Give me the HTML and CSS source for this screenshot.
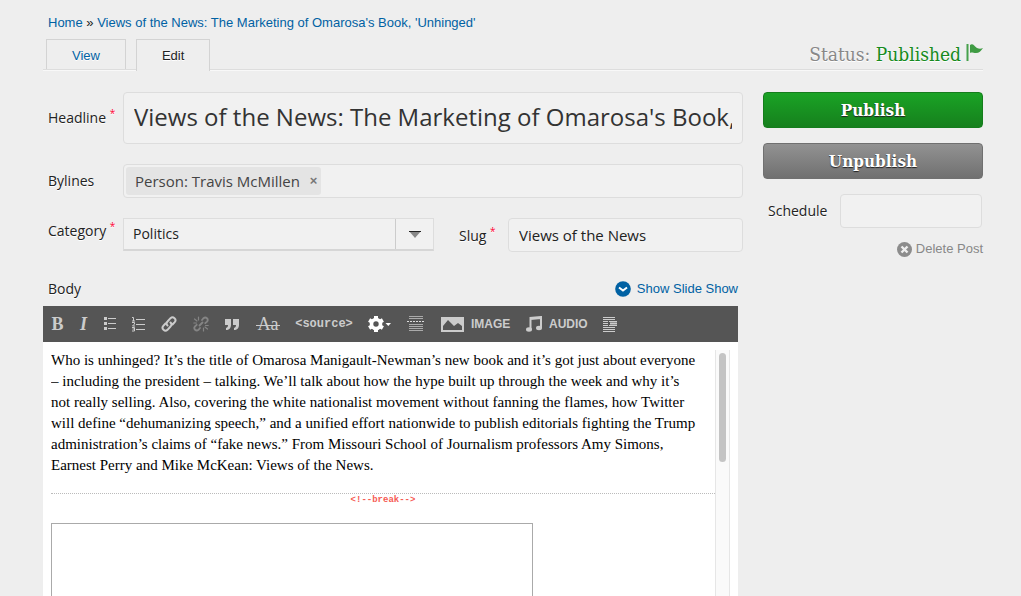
FILE: index.html
```html
<!DOCTYPE html>
<html lang="en">
<head>
<meta charset="utf-8">
<title>Edit post</title>
<link rel="stylesheet" href="styles.css">
</head>
<body>
<div class="page">
  <header class="top">
    <nav class="crumbs" aria-label="Breadcrumb"><a href="#">Home</a> » <a href="#">Views of the News: The Marketing of Omarosa's Book, 'Unhinged'</a></nav>
    <div class="bar">
      <nav class="tabs" aria-label="Post"><a class="tab" href="#">View</a><a class="tab tab-on" href="#">Edit</a></nav>
      <div class="status"><span>Status: <b class="state">Published</b></span>
        <svg class="flag" width="17" height="18" viewBox="0 0 17 18"><path d="M1.500 0v17" stroke="#47a04b" stroke-width="2"/><path d="M4 1c3-2 4 1 7 3 2 1 4 1 6 0-2 3-4 5-7 5-3 0-4-1-6 0z" fill="#3f9b43"/></svg>
      </div>
    </div>
  </header>
  <main class="layout">
    <section class="form">
      <div class="row">
        <label class="label" for="headline">Headline <sup class="req">*</sup></label>
        <input class="field headline" id="headline" type="text" value="Views of the News: The Marketing of Omarosa's Book, 'Unhinged'">
      </div>
      <div class="row">
        <label class="label" for="bylines">Bylines</label>
        <div class="field tokens">
          <span class="token">Person: Travis McMillen <button class="remove" type="button" aria-label="Remove">×</button></span>
          <input class="token-input" id="bylines" type="text">
        </div>
      </div>
      <div class="row row-last">
        <label class="label label-up" for="category">Category <sup class="req">*</sup></label>
        <div class="pair">
          <div class="select">
            <select class="picker" id="category"><option>Politics</option></select>
            <span class="arrow"><svg width="12" height="7" viewBox="0 0 12 7"><path d="M0 0h12L6 7z" fill="#888"/><path d="M0 0h12v1H0z" fill="#222"/></svg></span>
          </div>
          <label class="slug-label" for="slug">Slug <sup class="req">*</sup></label>
          <input class="field slug" id="slug" type="text" value="Views of the News">
        </div>
      </div>
      <div class="body-head">
        <span class="label">Body</span>
        <a class="slides" href="#"><svg width="16" height="16" viewBox="0 0 16 16"><circle cx="8" cy="8" r="7.800" fill="#0061a3"/><path d="M4 6.500l4 3 4-3" fill="none" stroke="#fff" stroke-width="2"/></svg>Show Slide Show</a>
      </div>
      <div class="editor">
        <div class="toolbar" role="toolbar">
          <button class="tool bold w11" type="button">B</button>
          <button class="tool ital w9" type="button">I</button>
          <button class="tool" type="button" aria-label="Bullets"><svg width="12" height="14" viewBox="0 0 12 14"><path d="M0 0h3v3H0zM0 5h3v3H0zM0 10h3v3H0zM4 1h8v1H4zM4 6h8v1H4zM4 11h8v1H4z" fill="#ccc"/></svg></button>
          <button class="tool" type="button" aria-label="Numbers"><svg width="13" height="15" viewBox="0 0 13 15"><path d="M4 2h9v1H4zM4 7h9v1H4zM4 12h9v1H4z" fill="#ccc"/><path d="M0 .5h1.500V4M0 4h3M0 5.500h2.500v1.500L.5 9H3M0 10.500h2.500v3.500H0M.5 12h2" fill="none" stroke="#ccc"/></svg></button>
          <button class="tool" type="button" aria-label="Link"><svg width="16" height="16" viewBox="0 0 16 16" fill="none" stroke="#ccc" stroke-width="2" stroke-linecap="round"><path d="M6.500 9.500c-1.500-1.500-1-3 0-4L9.500 2.200c2.600-2.400 6.600 1 4.200 3.900L11.500 8.500M9.500 6.500c1.500 1.500 1 3 0 4l-3 3.300c-2.600 2.400-6.600-1-4.200-3.900L4.500 7.500"/></svg></button>
          <button class="tool" type="button" aria-label="Unlink"><svg width="16" height="16" viewBox="0 0 16 16" fill="none" stroke="#858585" stroke-width="1.800" stroke-linecap="round"><path d="M9 4l1.500-1.800c2.500-2 5.500 1 3.500 3.400L12.300 7.200M7 12l-1.500 1.800c-2.500 2-5.500-1-3.500-3.400l1.700-1.600M6.500 9.500l3-3"/><path stroke-width="1.200" d="M5.500 1v3M1.500 3L4 5M.8 7h2.700M10.500 12v3M12 11l2.500 2M12.500 9.500h2.700"/></svg></button>
          <button class="tool" type="button" aria-label="Quote"><svg width="15" height="13" viewBox="0 0 15 13"><path d="M0 1h6v6c0 3-2 5-5 5v-2c1.500-.5 2-1.500 2-3H0zM8 1h6v6c0 3-2 5-5 5v-2c1.500-.5 2-1.500 2-3H8z" fill="#ccc"/></svg></button>
          <button class="tool strike w24" type="button">Aa</button>
          <button class="tool source w56" type="button">&lt;source&gt;</button>
          <button class="tool" type="button" aria-label="Settings"><svg width="23" height="16" viewBox="0 0 23 16"><g fill="none" stroke="#fff"><circle cx="8" cy="8" r="4.500" stroke-width="3.600"/><path stroke-width="4" d="M8 0v3M8 13v3M1.100 4l2.500 1.500M12.400 10.500L14.900 12M1.100 12l2.500-1.500M12.400 5.500L14.900 4"/></g><path d="M17.500 7H23l-2.700 3z" fill="#fff"/></svg></button>
          <button class="tool" type="button" aria-label="Teaser break"><svg width="18" height="16" viewBox="0 0 18 16"><path d="M2 .5h14M2 2.500h14M2 8.500h14M2 10.500h14M2 12.500h14M2 14.500h14" stroke="#aaa"/><path d="M0 5.500h18" stroke="#ddd" stroke-dasharray="2 1"/></svg></button>
          <button class="tool media w69" type="button"><svg width="23" height="15" viewBox="0 0 23 15"><path fill-rule="evenodd" d="M0 0h23v15H0zM2 13h19V9l-4-3-4 3-6-6-5 6z" fill="#ccc"/></svg>IMAGE</button>
          <button class="tool media w61" type="button"><svg class="note" width="16" height="16" viewBox="0 0 16 16"><path d="M4.500 13V2L15 1v11M4.500 3L15 2" fill="none" stroke="#ccc" stroke-width="2"/><ellipse cx="3" cy="13.500" rx="3" ry="2.200" fill="#ccc"/><ellipse cx="13" cy="12" rx="3" ry="2.200" fill="#ccc"/></svg>AUDIO</button>
          <button class="tool" type="button" aria-label="Pull text"><svg width="14" height="15" viewBox="0 0 14 15"><path d="M0 .5h12M0 2.500h12M0 4.500h5M0 6.500h5M0 8.500h5M0 10.500h12M0 12.500h12M0 14.500h12M6 4.500h8M6 8.500h8" stroke="#ccc"/><path d="M7 6.500h7" stroke="#ccc" stroke-width="2"/></svg></button>
        </div>
        <div class="content">
          <div class="doc">
            <p class="text">Who is unhinged? It’s the title of Omarosa Manigault-Newman’s new book and it’s got just about everyone<br>– including the president – talking. We’ll talk about how the hype built up through the week and why it’s<br>not really selling. Also, covering the white nationalist movement without fanning the flames, how Twitter<br>will define “dehumanizing speech,” and a unified effort nationwide to publish editorials fighting the Trump<br>administration’s claims of “fake news.” From Missouri School of Journalism professors Amy Simons,<br>Earnest Perry and Mike McKean: Views of the News.</p>
            <div class="break">&lt;!--break--&gt;</div>
            <div class="embed"></div>
          </div>
          <div class="track"><div class="thumb"></div></div>
        </div>
      </div>
    </section>
    <aside class="side">
      <button class="action publish" type="button">Publish</button>
      <button class="action unpublish" type="button">Unpublish</button>
      <div class="schedule"><label for="schedule">Schedule</label><input class="field date" id="schedule" type="text"></div>
      <a class="delete" href="#"><svg width="15" height="15" viewBox="0 0 15 15"><circle cx="7.500" cy="7.500" r="7.500" fill="#8c8c8c"/><path d="M4.500 4.500l6 6M10.500 4.500l-6 6" stroke="#eee" stroke-width="2.400"/></svg>Delete Post</a>
    </aside>
  </main>
</div>
</body>
</html>
```
FILE: styles.css
```css
* { box-sizing: border-box; }
body {
  margin: 0;
  background: #eee;
  color: #222;
  font: 14px/20px "Open Sans", sans-serif;
}
a { color: #0061a3; text-decoration: none; }
button, input, select { font: inherit; color: inherit; margin: 0; }
svg { display: block; flex: none; }

.page {
  height: 100vh;
  overflow: hidden;
  display: flex;
  flex-direction: column;
  padding: 13px 38px 0 43px;
}
.crumbs {
  padding-left: 5px;
  font: 13px/20px "Liberation Sans", sans-serif;
}
.bar {
  display: flex;
  justify-content: space-between;
  margin-top: 6px;
  height: 31px;
  border-bottom: 1px solid #ddd;
  box-shadow: 0 1px #f8f8f8;
}
.tabs { display: flex; gap: 10px; padding-left: 3px; }
.tab {
  height: 30px;
  padding: 0 25px;
  border: 1px solid #d3d3d3;
  border-bottom: 0;
  font: 13px/32px "Liberation Sans", sans-serif;
  text-shadow: 0 1px #fff;
}
.tab-on { height: 32px; background: #eee; color: #222; }
.status {
  display: flex;
  gap: 5px;
  padding-top: 5px;
  color: #888;
  font: 19px/20px "DejaVu Serif Condensed", "DejaVu Serif", serif;
  text-shadow: 0 1px #fff;
}
.state { color: #168a20; font-weight: 400; }

.layout {
  flex: 1;
  min-height: 0;
  display: grid;
  grid-template-columns: minmax(0, 1fr) 220px;
  gap: 20px;
  padding-top: 22px;
}
.form { display: flex; flex-direction: column; min-height: 0; }
.row {
  display: grid;
  grid-template-columns: 80px minmax(0, 1fr);
  align-items: center;
  margin-bottom: 20px;
}
.row-last { margin-bottom: 0; }
.label { padding-left: 5px; text-shadow: 0 1px #fff; }
.label-up { padding-bottom: 8px; }
.req { color: #f03; font-size: 10px; line-height: 0; }
.field {
  width: 100%;
  min-width: 0;
  height: 34px;
  padding: 0 10px;
  border: 1px solid #ddd;
  border-radius: 4px;
  background: #f1f1f1;
}
.headline { height: 52px; padding-bottom: 4px; font-size: 24px; color: #333; }
.tokens { display: flex; align-items: center; padding: 0 2px; }
.token {
  display: flex;
  align-items: center;
  gap: 8px;
  height: 28px;
  padding: 0 2px 0 9px;
  border-radius: 3px;
  background: #e4e4e4;
  color: #444;
  font-size: 15px;
}
.remove { padding: 0; width: 11px; border: 0; background: none; color: #777; font: bold 13px/20px "Liberation Sans", sans-serif; }
.token-input { flex: 1; min-width: 0; border: 0; background: none; }
.pair {
  display: grid;
  grid-template-columns: minmax(0, 311fr) 74px minmax(0, 235fr);
  align-items: start;
}
.select {
  position: relative;
  height: 33px;
  border: 1px solid #ddd;
  border-bottom: 2px solid #d6d6d6;
  background: #f1f1f1;
}
.picker {
  appearance: none;
  width: 100%;
  height: 100%;
  padding: 0 9px;
  border: 0;
  background: none;
}
.arrow {
  position: absolute;
  top: 0;
  right: 0;
  bottom: 0;
  width: 38px;
  display: grid;
  place-items: center;
  border-left: 1px solid #ccc;
  pointer-events: none;
}
.slug-label { padding: 8px 0 0 25px; text-shadow: 0 1px #fff; }
.slug { font-size: 15px; }
.body-head {
  display: flex;
  justify-content: space-between;
  align-items: center;
  height: 54px;
  padding: 20px 5px 0 0;
}
.slides { display: flex; align-items: center; gap: 6px; font: 13px/20px "Liberation Sans", sans-serif; }
.editor {
  flex: 1;
  min-height: 0;
  display: flex;
  flex-direction: column;
  margin-right: 5px;
  background: #fff;
}
.toolbar {
  flex: none;
  display: flex;
  align-items: center;
  gap: 16px;
  height: 36px;
  padding-left: 9px;
  background: #555;
}
.tool {
  flex: none;
  display: flex;
  align-items: center;
  justify-content: center;
  padding: 0;
  border: 0;
  background: none;
  color: #ccc;
}
.bold { font: bold 18px/20px "Liberation Serif", serif; }
.ital { font: italic bold 18px/20px "Liberation Serif", serif; }
.strike {
  background: linear-gradient(#ccc, #ccc) 0 11px / 100% 1px no-repeat;
  font: 18px/20px "Liberation Serif", serif;
}
.source { font: bold 12px/20px "Liberation Mono", monospace; }
.media { gap: 7px; justify-content: flex-start; font: bold 12px/20px "Liberation Sans", sans-serif; }
.w9 { width: 9px; }
.w11 { width: 11px; }
.w24 { width: 24px; }
.w56 { width: 56px; }
.w61 { width: 61px; }
.w69 { width: 69px; }
.content {
  flex: 1;
  min-height: 0;
  display: flex;
  padding: 8px 8px 0;
}
.doc { flex: 1; min-width: 0; overflow: hidden; }
.text {
  margin: 0 0 17px;
  color: #000;
  font: 15px/21px "Liberation Serif", serif;
  white-space: nowrap;
}
.break {
  border-top: 1px dotted #bbb;
  color: #f65c55;
  font: bold 9px/13px "Liberation Mono", monospace;
  text-align: center;
}
.embed { width: 482px; height: 320px; margin-top: 16px; border: 1px solid #aaa; }
.track { width: 15px; padding: 3px 3px 0; border: solid #e6e6e6; border-width: 0 1px; background: #fafafa; }
.thumb { height: 109px; border-radius: 4px; background: #c4c4c4; }

.side { display: flex; flex-direction: column; }
.action {
  height: 36px;
  margin-bottom: 15px;
  padding: 0;
  border: 1px solid #157d1c;
  border-radius: 4px;
  color: #fff;
  font: bold 17px/20px "DejaVu Serif Condensed", "DejaVu Serif", serif;
  text-shadow: 0 1px 1px #222;
}
.publish { background: linear-gradient(#1aa325, #16801d); }
.unpublish { background: linear-gradient(#929292, #707070); border-color: #707070; }
.schedule {
  display: flex;
  align-items: center;
  justify-content: space-between;
  padding: 0 1px 0 5px;
  text-shadow: 0 1px #fff;
}
.date { width: 142px; }
.delete {
  display: flex;
  align-items: center;
  justify-content: flex-end;
  gap: 4px;
  margin-top: 11px;
  color: #888;
  font: 13px/20px "Liberation Sans", sans-serif;
}
```
